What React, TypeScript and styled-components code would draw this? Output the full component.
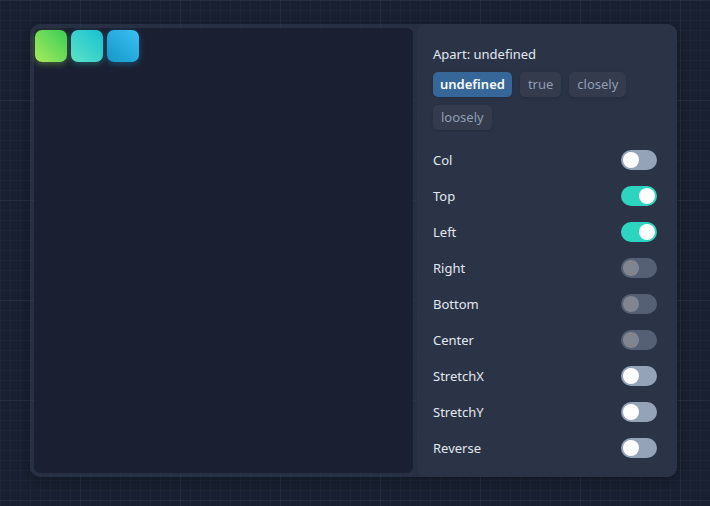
import React, { useState } from "react";
import styled, { createGlobalStyle, css } from "styled-components";

const GlobalStyle = createGlobalStyle`
  html, body {
    margin: 0;
    padding: 0;
    height: 100%;
  }
  body {
    font-family: "Noto Sans", "Open Sans", sans-serif;
    background-color: #182031;
    background-image:
      linear-gradient(rgba(255, 255, 255, 0.035) 1px, transparent 1px),
      linear-gradient(90deg, rgba(255, 255, 255, 0.035) 1px, transparent 1px),
      linear-gradient(rgba(255, 255, 255, 0.022) 1px, transparent 1px),
      linear-gradient(90deg, rgba(255, 255, 255, 0.022) 1px, transparent 1px);
    background-size: 100px 100px, 100px 100px, 10px 10px, 10px 10px;
    background-position: 80px 0, 80px 0, 0 0, 0 0;
  }
`;

const Page = styled.div`
  width: 710px;
  height: 506px;
  padding: 24px 30px;
  box-sizing: border-box;
`;

const Frame = styled.div`
  width: 647px;
  height: 453px;
  display: flex;
  background: rgba(52, 61, 82, 0.55);
  border-radius: 10px;
  box-shadow: 0 4px 14px rgba(0, 0, 0, 0.25);
`;

const Stage = styled.div`
  width: 379px;
  margin: 4px;
  background: rgba(26, 31, 48, 0.93);
  border-radius: 6px;
  display: flex;
  gap: 4px;
  padding: 2px 1px;
  box-sizing: border-box;
  align-items: flex-start;
`;

const gradients: Record<string, string> = {
  green: "linear-gradient(45deg, #a8eb5c 0%, #39cd56 100%)",
  teal: "linear-gradient(45deg, #5de3c5 0%, #17c0d3 100%)",
  blue: "linear-gradient(45deg, #1597c6 0%, #3bbff5 100%)",
};

const glows: Record<string, string> = {
  green: "rgba(163, 230, 80, 0.35)",
  teal: "rgba(70, 220, 200, 0.3)",
  blue: "rgba(40, 170, 230, 0.35)",
};

const Tile = styled.div<{ $tone: string }>`
  width: 32px;
  height: 32px;
  border-radius: 7px;
  background: ${(p) => gradients[p.$tone]};
  box-shadow: 0 2px 6px ${(p) => glows[p.$tone]};
`;

const Panel = styled.div`
  flex: 1;
  background: rgba(44, 52, 71, 0.94);
  border-radius: 10px;
  padding: 21px 20px 0 16px;
  box-sizing: border-box;
  color: #e2e8f0;
  font-size: 13px;
`;

const Title = styled.div`
  line-height: 18px;
  height: 18px;
  color: #e2e8f0;
`;

const Chips = styled.div`
  display: flex;
  flex-wrap: wrap;
  gap: 8px;
  margin-top: 9px;
  margin-bottom: 12px;
`;

const Chip = styled.button<{ $active?: boolean }>`
  height: 25px;
  border: none;
  border-radius: 5px;
  font-family: inherit;
  font-size: 13px;
  line-height: 25px;
  cursor: pointer;
  box-shadow: 0 1px 3px rgba(0, 0, 0, 0.15);
  ${(p) =>
    p.$active
      ? css`
          padding: 0 7px;
          background: #376798;
          color: #f8fafc;
          font-weight: 600;
        `
      : css`
          padding: 0 8px;
          background: #333b4d;
          color: #919eb2;
          font-weight: 400;
        `}
`;

const Row = styled.div`
  height: 36px;
  display: flex;
  align-items: center;
  justify-content: space-between;
`;

const Label = styled.span`
  color: #e2e8f0;
`;

const Track = styled.button<{ $on: boolean; $disabled?: boolean }>`
  width: 36px;
  height: 20px;
  border: none;
  border-radius: 10px;
  padding: 2px;
  display: flex;
  justify-content: ${(p) => (p.$on ? "flex-end" : "flex-start")};
  background: ${(p) => (p.$on ? "#2dd4bf" : "#94a3b8")};
  opacity: ${(p) => (p.$disabled ? 0.4 : 1)};
  cursor: pointer;
`;

const Knob = styled.span`
  width: 16px;
  height: 16px;
  border-radius: 50%;
  background: #ffffff;
`;

const options = ["undefined", "true", "closely", "loosely"];

const initialFlags = [
  { name: "Col", on: false, disabled: false },
  { name: "Top", on: true, disabled: false },
  { name: "Left", on: true, disabled: false },
  { name: "Right", on: false, disabled: true },
  { name: "Bottom", on: false, disabled: true },
  { name: "Center", on: false, disabled: true },
  { name: "StretchX", on: false, disabled: false },
  { name: "StretchY", on: false, disabled: false },
  { name: "Reverse", on: false, disabled: false },
];

export default function App() {
  const [apart, setApart] = useState("undefined");
  const [flags, setFlags] = useState(initialFlags);

  const toggle = (i: number) => {
    setFlags((prev) =>
      prev.map((f, idx) => (idx === i && !f.disabled ? { ...f, on: !f.on } : f))
    );
  };

  return (
    <>
      <GlobalStyle />
      <Page>
        <Frame>
          <Stage>
            <Tile $tone="green" />
            <Tile $tone="teal" />
            <Tile $tone="blue" />
          </Stage>
          <Panel>
            <Title>Apart: {apart}</Title>
            <Chips>
              {options.map((o) => (
                <Chip key={o} $active={apart === o} onClick={() => setApart(o)}>
                  {o}
                </Chip>
              ))}
            </Chips>
            {flags.map((f, i) => (
              <Row key={f.name}>
                <Label>{f.name}</Label>
                <Track $on={f.on} $disabled={f.disabled} onClick={() => toggle(i)}>
                  <Knob />
                </Track>
              </Row>
            ))}
          </Panel>
        </Frame>
      </Page>
    </>
  );
}
